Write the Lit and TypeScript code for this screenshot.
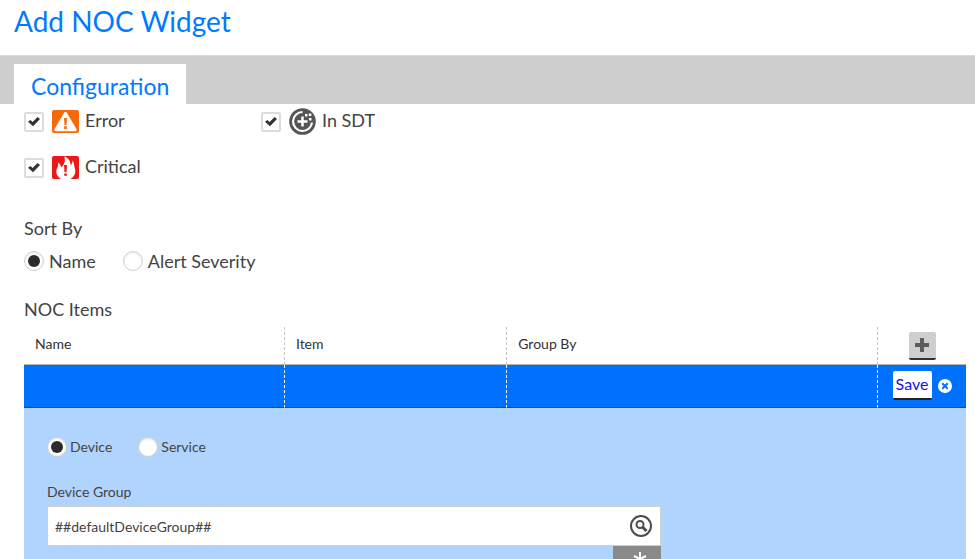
import { LitElement, html, css } from "lit";
import { customElement, state } from "lit/decorators.js";

@customElement("app-root")
export class AppRoot extends LitElement {
  @state() private sortBy = "name";
  @state() private itemType = "device";

  static styles = css`
    :host {
      display: block;
      height: 100vh;
      overflow: hidden;
      background: #fff;
      color: #434343;
      font-family: Lato, "Open Sans", sans-serif;
      font-size: 18px;
      line-height: 24px;
    }
    * {
      box-sizing: border-box;
    }
    h1 {
      margin: 0;
      padding: 2px 14px 14px;
      font-size: 28px;
      line-height: 39px;
      font-weight: 400;
      color: #007aff;
    }
    .tabs {
      display: flex;
      padding: 8px 14px 0;
      height: 49px;
      background: #cfcfcf;
      border-top: 1px solid #dcdcdc;
    }
    .tab {
      border: 0;
      margin: 0;
      padding: 4px 17px 0;
      background: #fff;
      color: #007aff;
      font: inherit;
      font-size: 23px;
      line-height: 32px;
    }
    main {
      padding: 4px 9px 0 24px;
    }
    .states {
      display: grid;
      grid-template-columns: 237px 237px;
      row-gap: 19px;
    }
    label {
      display: flex;
      align-items: center;
    }
    input {
      font: inherit;
      color: inherit;
    }
    input[type="checkbox"],
    input[type="radio"] {
      appearance: none;
      flex: none;
      display: grid;
      place-items: center;
      margin: 0;
      width: 20px;
      height: 20px;
      background: #fff;
      border: 1px solid #d0d0d0;
    }
    input[type="checkbox"] {
      border-width: 2px;
      border-color: #dcdcdc;
      border-radius: 2px;
    }
    input[type="checkbox"]:checked::before {
      content: "";
      width: 12px;
      height: 10px;
      background: #333;
      clip-path: polygon(0 52%, 20% 34%, 38% 54%, 80% 4%, 100% 24%, 42% 98%);
    }
    input[type="radio"] {
      border-radius: 50%;
      box-shadow: inset 0 1px 2px #e4e4e4;
    }
    input[type="radio"]:checked::before {
      content: "";
      width: 12px;
      height: 12px;
      border-radius: 50%;
      background: #2b2b2b;
    }
    svg {
      display: block;
      flex: none;
    }
    .states label {
      height: 27px;
    }
    .states span {
      padding-bottom: 3px;
    }
    .state-icon {
      margin: 0 6px 0 8px;
    }
    h2 {
      margin: 0;
      font-size: 18px;
      line-height: 24px;
      font-weight: 400;
    }
    .sort {
      margin-top: 35px;
    }
    .radios {
      display: flex;
      gap: 27px;
      margin-top: 9px;
    }
    .radios label {
      gap: 5px;
    }
    .items {
      margin-top: 24px;
    }
    table {
      width: 100%;
      margin-top: 6px;
      table-layout: fixed;
      border-collapse: separate;
      border-spacing: 0;
      font-size: 14px;
    }
    .c-name {
      width: 27.7%;
    }
    .c-item {
      width: 23.6%;
    }
    .c-act {
      width: 88px;
    }
    th {
      height: 38px;
      padding: 0 11px 4px;
      text-align: left;
      font-weight: 400;
      color: #333;
      border-bottom: 1px solid #b4b4b4;
    }
    th:not(.act),
    .editing td:not(.act) {
      border-right: 1px dashed #c4c4c4;
    }
    .editing td {
      height: 43px;
      padding: 0 0 1px;
      background: #0070ff;
      border-bottom: 1px solid #0646e4;
    }
    .editing td:not(.act) {
      border-right-color: #fff;
    }
    th.act {
      padding: 0;
    }
    button {
      cursor: pointer;
    }
    .add {
      display: grid;
      place-items: center;
      margin: 0 auto;
      width: 27px;
      height: 28px;
      padding: 0;
      border: 0;
      border-bottom: 2px solid #333;
      border-radius: 2px;
      background: #cfcfcf;
    }
    .actions {
      display: flex;
      align-items: center;
      justify-content: center;
      gap: 6px;
    }
    .save {
      width: 39px;
      height: 29px;
      padding: 0 0 2px;
      border: 0;
      border-bottom: 2px solid #222;
      border-radius: 2px;
      background: #fff;
      color: #1414e6;
      font: inherit;
      font-size: 16px;
    }
    .close {
      padding: 0;
      border: 0;
      background: none;
    }
    .detail {
      padding: 19px 23px 24px;
      background: #b1d4ff;
      vertical-align: top;
    }
    .detail .radios {
      margin-top: 8px;
      gap: 26px;
    }
    .detail .radios label {
      gap: 3px;
    }
    .field {
      width: 68.5%;
      margin-top: 21px;
    }
    .box {
      display: flex;
      align-items: center;
      height: 40px;
      margin-top: 2px;
      padding: 0 7px;
      background: #fff;
      border: 1px solid #d0d0d0;
    }
    .box input {
      flex: 1;
      min-width: 0;
      padding: 2px 0 0;
      border: 0;
      outline: 0;
      background: none;
    }
    .box button {
      padding: 0;
      border: 0;
      background: none;
    }
    .wild {
      display: grid;
      place-items: center;
      width: 48px;
      height: 26px;
      margin-left: auto;
      padding: 0 0 0 6px;
      border: 0;
      background: #8a8a8a;
    }
  `;

  private radio(group: "sortBy" | "itemType", value: string, text: string) {
    return html`<label>
      <input
        type="radio"
        name=${group}
        .checked=${this[group] === value}
        @change=${() => (this[group] = value)}
      />${text}
    </label>`;
  }

  render() {
    return html`
      <h1>Add NOC Widget</h1>
      <div class="tabs" role="tablist">
        <button class="tab" role="tab" aria-selected="true">Configuration</button>
      </div>
      <main>
        <div class="states">
          <label>
            <input type="checkbox" checked />
            <svg class="state-icon" width="27" height="23" viewBox="0 0 27 23">
              <rect width="27" height="23" rx="2" fill="#f4690c" />
              <path d="M13.5 3 23.500 20H3.500Z" fill="#fff" stroke="#fff" stroke-width="2.500" stroke-linejoin="round" />
              <path d="M12 8h3l-.5 7h-2zM12.200 16.300h2.600v2.600h-2.600z" fill="#f4690c" />
            </svg>
            <span>Error</span>
          </label>
          <label>
            <input type="checkbox" checked />
            <svg class="state-icon" width="27" height="27" viewBox="0 0 27 27">
              <circle cx="13.500" cy="13.500" r="13.300" fill="#555" />
              <path d="M13.500 4A9.500 9.500 0 1 0 23 14.500" fill="none" stroke="#fff" stroke-width="2.200" />
              <path d="M16 6h2.500v2.500h-2.500zM19.800 5.500h2.500v2.500h-2.500zM20 10h2.500v2.500h-2.500z" fill="#fff" />
              <path d="M13.500 8.500v10M8.500 13.500h10" stroke="#fff" stroke-width="2.500" />
            </svg>
            <span>In SDT</span>
          </label>
          <label>
            <input type="checkbox" checked />
            <svg class="state-icon" width="27" height="23" viewBox="0 0 27 23">
              <rect width="27" height="23" rx="2" fill="#ee1717" />
              <path
                d="M9 23C5.500 21 3.800 18 4.300 14.800 4.700 12.200 6.600 10.500 6 6.500 8 7.500 9 9.500 9.200 11.500 11.500 9.500 14 5.500 12.300 0.500 16 1.500 18.600 5 18.700 9.200 20 8.200 20.500 6.500 20.300 4.500 22.500 6.500 21.800 9.500 22.800 12 24.300 16.500 22.500 20.800 18.500 23Z"
                fill="#fff"
              />
              <path d="M12 9h3l-.5 7.200h-2zM12.200 17.400h2.600v2.400h-2.600z" fill="#ee1717" />
            </svg>
            <span>Critical</span>
          </label>
        </div>

        <section class="sort">
          <h2>Sort By</h2>
          <div class="radios" role="radiogroup" aria-label="Sort By">
            ${this.radio("sortBy", "name", "Name")}
            ${this.radio("sortBy", "severity", "Alert Severity")}
          </div>
        </section>

        <section class="items">
          <h2>NOC Items</h2>
          <table>
            <colgroup>
              <col class="c-name" />
              <col class="c-item" />
              <col />
              <col class="c-act" />
            </colgroup>
            <thead>
              <tr>
                <th>Name</th>
                <th>Item</th>
                <th>Group By</th>
                <th class="act">
                  <button class="add" aria-label="Add item">
                    <svg width="14" height="14" viewBox="0 0 14 14">
                      <path d="M7 0v14M0 7h14" stroke="#5c5c5c" stroke-width="4" />
                    </svg>
                  </button>
                </th>
              </tr>
            </thead>
            <tbody>
              <tr class="editing">
                <td></td>
                <td></td>
                <td></td>
                <td class="act">
                  <div class="actions">
                    <button class="save">Save</button>
                    <button class="close" aria-label="Cancel">
                      <svg width="14" height="14" viewBox="0 0 14 14">
                        <circle cx="7" cy="7" r="7" fill="#fff" />
                        <path d="m4.200 4.200 5.600 5.600m0-5.600-5.600 5.600" stroke="#0070ff" stroke-width="2" />
                      </svg>
                    </button>
                  </div>
                </td>
              </tr>
              <tr>
                <td class="detail" colspan="4">
                  <div class="radios" role="radiogroup" aria-label="Item type">
                    ${this.radio("itemType", "device", "Device")}
                    ${this.radio("itemType", "service", "Service")}
                  </div>
                  <div class="field">
                    <label for="group">Device Group</label>
                    <div class="box">
                      <input id="group" type="text" value="##defaultDeviceGroup##" />
                      <button aria-label="Search groups">
                        <svg width="24" height="24" viewBox="0 0 24 24" fill="none" stroke="#4c4c4c">
                          <circle cx="12" cy="12" r="10" stroke-width="2" />
                          <circle cx="11" cy="10.500" r="3.500" stroke-width="2" />
                          <path d="m13.500 13 4 4" stroke-width="3" />
                        </svg>
                      </button>
                    </div>
                    <button class="wild" aria-label="Insert wildcard">
                      <svg width="14" height="14" viewBox="0 0 14 14">
                        <path d="M7 0v14M1 4l12 6M13 4l-12 6" stroke="#fff" stroke-width="2" />
                      </svg>
                    </button>
                  </div>
                </td>
              </tr>
            </tbody>
          </table>
        </section>
      </main>
    `;
  }
}
